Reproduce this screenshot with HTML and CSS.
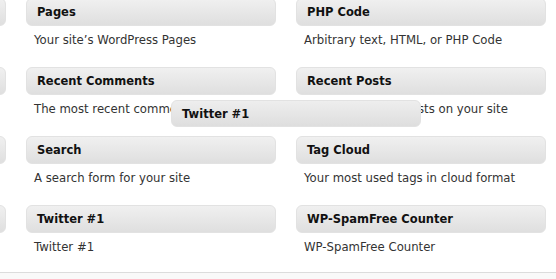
FILE: index.html
```html
<!DOCTYPE html>
<html lang="en">
<head>
    <meta charset="UTF-8">
    <title>Available Widgets</title>
    <link rel="stylesheet" href="styles.css">
</head>
<body>
    <div class="widget-area">
        <div class="widget-list">
            <div class="widget"><div class="widget-top"></div></div>
            <div class="widget"><div class="widget-top"><h4>Pages</h4></div><p class="widget-desc">Your site’s WordPress Pages</p></div>
            <div class="widget"><div class="widget-top"><h4>PHP Code</h4></div><p class="widget-desc">Arbitrary text, HTML, or PHP Code</p></div>

            <div class="widget"><div class="widget-top"></div></div>
            <div class="widget"><div class="widget-top"><h4>Recent Comments</h4></div><p class="widget-desc">The most recent comments</p></div>
            <div class="widget"><div class="widget-top"><h4>Recent Posts</h4></div><p class="widget-desc">The most recent posts on your site</p></div>

            <div class="widget"><div class="widget-top"></div></div>
            <div class="widget"><div class="widget-top"><h4>Search</h4></div><p class="widget-desc">A search form for your site</p></div>
            <div class="widget"><div class="widget-top"><h4>Tag Cloud</h4></div><p class="widget-desc">Your most used tags in cloud format</p></div>

            <div class="widget"><div class="widget-top"></div></div>
            <div class="widget"><div class="widget-top"><h4>Twitter #1</h4></div><p class="widget-desc">Twitter #1</p></div>
            <div class="widget"><div class="widget-top"><h4>WP-SpamFree Counter</h4></div><p class="widget-desc">WP-SpamFree Counter</p></div>
        </div>
        <div class="widget-top dragging"><h4>Twitter #1</h4></div>
    </div>
    <div class="footer-line"></div>
</body>
</html>
```
FILE: styles.css
```css
body {
    margin: 0;
    font-family: "DejaVu Sans", Verdana, sans-serif;
    background: #fff;
    overflow: hidden;
}
.widget-area {
    position: relative;
    display: flow-root;
    height: 272px;
}
.widget-list {
    display: grid;
    grid-template-columns: 250px 250px 250px;
    column-gap: 20px;
    margin-left: -244px;
    margin-top: -2px;
}
.widget {
    height: 69px;
}
.widget-top {
    height: 26px;
    border: 1px solid #e2e2e2;
    border-radius: 6px;
    background: linear-gradient(to bottom, #f0f0f0, #dfdfdf);
}
.widget-top h4 {
    margin: 0;
    padding: 6px 0 0 10px;
    font-size: 11.5px;
    line-height: 14px;
    font-weight: bold;
    color: #111;
}
.widget-desc {
    margin: 0;
    padding: 7px 0 0 8px;
    font-size: 11.7px;
    line-height: 14px;
    color: #333;
}
.dragging {
    position: absolute;
    left: 171px;
    top: 100px;
    width: 248px;
    height: 25px;
    background: linear-gradient(to bottom, #eeeeee, #dedede);
}
.dragging h4 {
    padding-top: 6px;
}
.footer-line {
    border-top: 1px solid #dcdcdc;
    height: 6px;
    background: #f9f9f9;
}
```
